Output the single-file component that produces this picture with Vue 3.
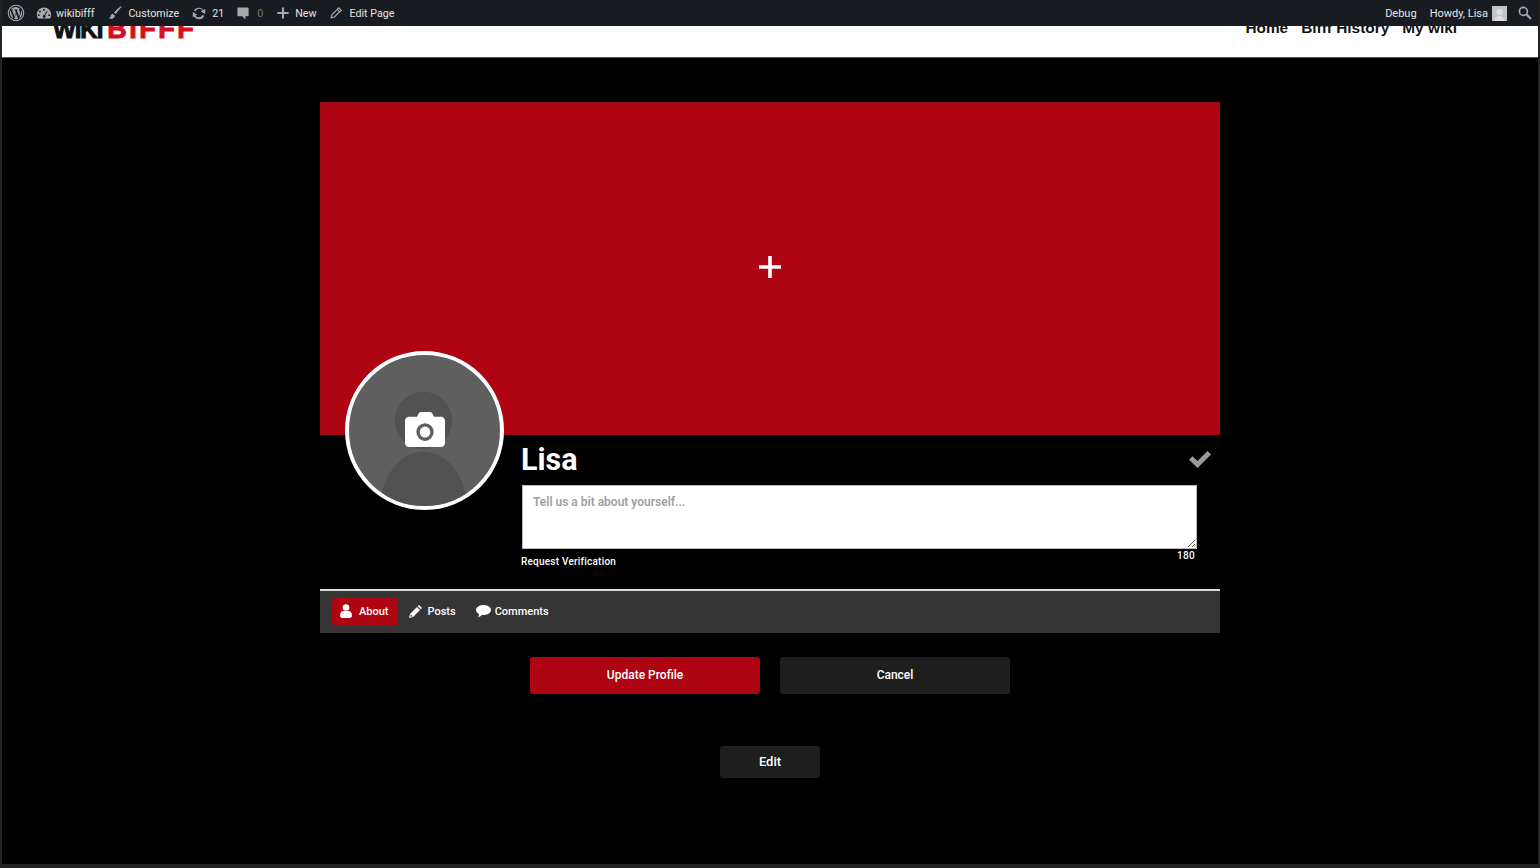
<template>
  <div class="frame">
    <div class="adminbar">
      <div class="bar-group">
        <span class="bar-item wp">
          <svg width="18" height="18" viewBox="0 0 20 20"><circle cx="10" cy="10" r="8.6" fill="none" stroke="#a7aaad" stroke-width="1.2"/><path d="M3.2 10c0 2.7 1.6 5 3.900 6.100L3.800 7.200C3.400 8.100 3.200 9 3.200 10zm11.300-.4c0-.8-.3-1.400-.6-1.800-.3-.5-.6-1-.6-1.500 0-.6.5-1.100 1.100-1.100h.1A6.800 6.800 0 0 0 4.300 6.200h.4c.7 0 1.800-.1 1.800-.1.4 0 .4.500 0 .6l-.7.100 2.500 7.300 1.500-4.400-1-2.900-.7-.1c-.4 0-.3-.6 0-.6 0 0 1.100.1 1.800.1s1.800-.1 1.800-.1c.4 0 .4.500 0 .6l-.7.100 2.400 7.200.7-2.300c.3-.9.400-1.500.400-2.100zM10.100 10.700l-2 5.900a6.800 6.800 0 0 0 4.200-.1l-2.200-5.800zm5.900-3.900c0 .2.100.5.100.7 0 .7-.1 1.500-.5 2.500l-2.100 6A6.800 6.800 0 0 0 16 6.800z" fill="#a7aaad"/></svg>
        </span>
        <span class="bar-item site">
          <svg width="16" height="16" viewBox="0 0 20 20"><path fill="#a7aaad" d="M10 3a9 9 0 0 0-9 9c0 1.900.6 3.600 1.600 5h14.800A9 9 0 0 0 10 3zm0 2a1.200 1.200 0 1 1 0 2.400A1.200 1.200 0 0 1 10 5zM5 7a1.200 1.200 0 1 1 0 2.400A1.200 1.200 0 0 1 5 7zm-1.500 4.500a1.200 1.200 0 1 1 0 2.400 1.200 1.200 0 0 1 0-2.400zm13 0a1.200 1.200 0 1 1 0 2.400 1.200 1.200 0 0 1 0-2.400zM13.500 7.500l.9.600-3 5a1.700 1.700 0 1 1-1-.5l3.100-5.100z"/></svg>
          wikibifff
        </span>
        <span class="bar-item customize">
          <svg width="16" height="16" viewBox="0 0 20 20"><path fill="#a7aaad" d="M18 1.500c-2.500 1.200-7 4.700-9.300 8.200l2.100 1.700C13.400 8.300 17 3.700 18.500 2zM7.500 10.800c-1.700.2-2.500 1.300-2.800 2.600-.3 1.300-1 2.700-2.700 3.300 2.800 1 6.500.6 7.500-2 .3-.8.100-1.500-.3-2.100z"/></svg>
          Customize
        </span>
        <span class="bar-item">
          <svg width="16" height="16" viewBox="0 0 20 20"><path fill="#a7aaad" d="M10.200 3.300c2.300 0 4.300 1.200 5.400 3l2.200-1.300v6.200l-5.400-3 2-1.200a4.800 4.800 0 0 0-8.600.6L3.500 7.500a6.900 6.900 0 0 1 6.700-4.200zM2.200 8.800l5.400 3-2 1.200a4.800 4.800 0 0 0 8.600-.6l2.300.9a6.900 6.900 0 0 1-12.300 1.400L2.200 15z"/></svg>
          21
        </span>
        <span class="bar-item comment">
          <svg width="16" height="16" viewBox="0 0 20 20"><path fill="#a7aaad" d="M4 3h12c.6 0 1 .4 1 1v9c0 .6-.4 1-1 1h-3v4l-4-4H4c-.6 0-1-.4-1-1V4c0-.6.4-1 1-1z"/></svg>
          <span class="muted">0</span>
        </span>
        <span class="bar-item add">
          <svg width="16" height="16" viewBox="0 0 20 20"><path fill="#a7aaad" d="M8.700 3h2.600v5.700H17v2.600h-5.700V17H8.700v-5.700H3V8.700h5.700z"/></svg>
          New
        </span>
        <span class="bar-item">
          <svg width="16" height="16" viewBox="0 0 20 20"><path fill="none" stroke="#a7aaad" stroke-width="1.500" d="M13.500 3.500l3 3-8.500 8.500-4 1 1-4zM11.500 5.500l3 3"/></svg>
          Edit Page
        </span>
      </div>
      <div class="bar-group right">
        <span class="bar-item">Debug</span>
        <span class="bar-item howdy">
          Howdy, Lisa
          <svg class="bar-avatar" width="15" height="15" viewBox="0 0 15 15"><rect width="15" height="15" fill="#c4c4c4"/><circle cx="7.500" cy="6" r="3" fill="#dedede"/><ellipse cx="7.500" cy="15" rx="5" ry="5" fill="#dedede"/></svg>
        </span>
        <span class="bar-item search">
          <svg width="16" height="16" viewBox="0 0 20 20"><circle cx="8" cy="8" r="5" fill="none" stroke="#a7aaad" stroke-width="2"/><path d="M12 12l5.500 5.500" stroke="#a7aaad" stroke-width="2.600"/></svg>
        </span>
      </div>
    </div>

    <header class="site-header">
      <div class="logo"><span class="logo-wiki">WIKI</span><span class="logo-bifff">BIFFF</span></div>
      <nav class="site-nav">
        <a>Home</a>
        <a>Bifff History</a>
        <a>My wiki</a>
      </nav>
    </header>

    <main class="profile">
      <div class="cover">
        <svg class="cover-plus" width="22" height="22" viewBox="0 0 22 22"><path fill="#fff" d="M9.200 0h3.600v9.200H22v3.600h-9.200V22H9.200v-9.200H0V9.200h9.200z"/></svg>
      </div>

      <div class="info">
        <div class="avatar">
          <svg class="avatar-person" viewBox="0 0 150 150">
            <circle cx="74" cy="65" r="28.500" fill="#525252"/>
            <ellipse cx="74" cy="156" rx="44" ry="60" fill="#525252"/>
          </svg>
          <svg class="camera" width="40" height="35" viewBox="0 0 40 34" preserveAspectRatio="none">
            <path fill="#fff" d="M12 4.500l1.500-2.800C14 .7 15 0 16 0h9c1 0 2 .7 2.500 1.700L29 4.500h7c2.200 0 4 1.800 4 4V30c0 2.200-1.800 4-4 4H4c-2.200 0-4-1.800-4-4V8.500c0-2.200 1.800-4 4-4z"/>
            <circle cx="20" cy="19.500" r="8.600" fill="#5f5f5f"/>
            <circle cx="20" cy="19.500" r="5.300" fill="#fff"/>
          </svg>
        </div>
        <div class="details">
          <div class="name-row">
            <h1>Lisa</h1>
            <svg class="check" width="22" height="17" viewBox="0 0 22 17"><path fill="#9a9a9a" d="M8.500 17L0 8.800l3.500-3.500 5 4.800L18.500 0 22 3.500z"/></svg>
          </div>
          <textarea class="bio" placeholder="Tell us a bit about yourself..."></textarea>
          <div class="count">180</div>
          <a class="verify">Request Verification</a>
        </div>
      </div>

      <div class="tabs">
        <a class="tab active">
          <svg width="12" height="14" viewBox="0 0 12 14"><circle cx="6" cy="3.500" r="3.300" fill="#fff"/><path fill="#fff" d="M0 11.500C0 8.800 1.500 7 3.300 7h5.400C10.500 7 12 8.800 12 11.500c0 1.600-1 2.500-2.300 2.500H2.300C1 14 0 13.100 0 11.500z"/></svg>
          About
        </a>
        <a class="tab">
          <svg width="13" height="13" viewBox="0 0 13 13"><path fill="#fff" d="M10 0l3 3-1.300 1.300-3-3zM8 2l3 3-7 7-4 1 1-4zM1.800 9.500l-.5 2.200 2.200-.5z"/></svg>
          Posts
        </a>
        <a class="tab comments">
          <svg width="15" height="14" viewBox="0 0 15 14"><path fill="#fff" d="M7.500 1C11.600 1 15 3.200 15 6s-3.400 5-7.500 5c-.6 0-1.100 0-1.600-.1C4.800 12 3.500 12.800 1.800 13c.7-.8 1.200-1.600 1.300-2.900C1.200 9.200 0 7.700 0 6c0-2.800 3.400-5 7.500-5z"/></svg>
          Comments
        </a>
      </div>

      <div class="actions">
        <button class="btn primary">Update Profile</button>
        <button class="btn">Cancel</button>
      </div>

      <div class="edit-row">
        <button class="btn edit">Edit</button>
      </div>
    </main>
  </div>
</template>

<script setup>
</script>

<style>
html, body { margin: 0; background: #000; }
</style>

<style scoped>
.frame {
  height: 868px;
  box-sizing: border-box;
  overflow: hidden;
  background: #000;
  border-left: 2px solid #222;
  border-right: 2px solid #222;
  border-bottom: 4px solid #222;
  font-family: Roboto, "Liberation Sans", sans-serif;
  color: #fff;
}

.adminbar {
  margin: 0 -2px;
  height: 26px;
  background: #181c20;
  display: flex;
  justify-content: space-between;
  align-items: center;
  padding: 0 7px;
  position: relative;
  z-index: 2;
  font: 400 10.7px/26px Roboto, "Liberation Sans", sans-serif;
  color: #e4e4e6;
}
.bar-group { display: flex; align-items: center; gap: 12px; }
.bar-group.right { font-size: 11px; gap: 13px; }
.bar-item {
  display: flex;
  align-items: center;
  gap: 5px;
  white-space: nowrap;
  height: 26px;
  box-sizing: border-box;
  padding-top: 2px;
}
.bar-item svg { margin-top: -2px; }
.wp { margin-right: -1px; }
.site { gap: 4px; }
.customize { margin-left: 1px; }
.comment { margin-left: -1px; gap: 6px; }
.add { gap: 4px; }
.howdy { gap: 4px; }
.search { margin-left: -3px; }
.muted { color: #6f7478; }

.site-header {
  height: 31px;
  background: #fff;
  border-bottom: 1px solid #555;
  display: flex;
  justify-content: space-between;
  padding: 0 81px 0 51px;
  overflow: hidden;
  color: #111;
}
.logo {
  margin-top: -10px;
  height: 24px;
  font: 900 27px/1 "Liberation Sans", sans-serif;
  white-space: nowrap;
  -webkit-text-stroke: 1px currentColor;
}
.logo-wiki { color: #111; font-size: 24px; letter-spacing: -1px; margin-right: 5px; }
.logo-bifff { color: #d50f1f; letter-spacing: 2.5px; }
.site-nav { display: flex; gap: 13px; margin-top: -8px; font: 700 15.4px/1.300 "Liberation Sans", sans-serif; }

.profile { width: 900px; margin: 44px auto 0; }

.cover {
  box-sizing: border-box;
  height: 333px;
  background: #af0411;
  border: 1px solid #9c0a14;
  display: flex;
  align-items: center;
  justify-content: center;
}
.cover-plus { margin-bottom: 3px; }

.info {
  display: flex;
  height: 154px;
  padding-left: 25px;
}
.avatar {
  position: relative;
  width: 151px;
  height: 151px;
  margin-top: -84px;
  flex: none;
  border: 4px solid #fff;
  border-radius: 50%;
  background: #5f5f5f;
  overflow: hidden;
}
.avatar-person { position: absolute; inset: 0; width: 100%; height: 100%; }
.camera { position: absolute; left: 56px; top: 57px; }

.details { margin-left: 17px; width: 690px; }
.name-row { display: flex; justify-content: space-between; align-items: center; height: 50px; padding-bottom: 2px; box-sizing: border-box; }
.name-row h1 { margin: 2px 0 0; font: 700 30.5px/1 Roboto, sans-serif; }
.bio {
  display: block;
  box-sizing: border-box;
  width: 675px;
  height: 64px;
  margin-left: 1px;
  padding: 9px 10px 8px;
  border: 1px solid #bbb;
  background: #fff;
  font: 600 12px/1.300 Roboto, sans-serif;
}
.bio::placeholder { color: #a0a0a0; }
.count { width: 674px; text-align: right; font: 500 10px/14px Roboto, sans-serif; letter-spacing: .3px; }
.verify { display: block; margin-top: -7px; font: 500 10px/12px Roboto, sans-serif; letter-spacing: .22px; }

.tabs {
  box-sizing: border-box;
  height: 44px;
  padding: 0 0 2px 12px;
  background: #353535;
  border-top: 2px solid #ddd;
  display: flex;
  align-items: center;
  gap: 2px;
}
.tab {
  display: flex;
  align-items: center;
  gap: 6px;
  height: 27px;
  padding: 0 9px;
  border-radius: 3px;
  font: 500 11px/1 Roboto, sans-serif;
}
.tab.active { background: #af0411; gap: 7px; padding: 0 9px 0 8px; }
.tab.comments { gap: 4px; }

.actions { display: flex; justify-content: center; gap: 20px; margin-top: 24px; }
.btn {
  width: 230px;
  height: 37px;
  padding: 0 0 2px;
  border: none;
  border-radius: 3px;
  background: #1e1e1e;
  color: #fff;
  font: 500 12px/1 Roboto, sans-serif;
}
.btn.primary { background: #af0411; }
.edit-row { display: flex; justify-content: center; margin-top: 52px; }
.btn.edit { width: 100px; height: 32px; font-size: 13px; }
</style>
